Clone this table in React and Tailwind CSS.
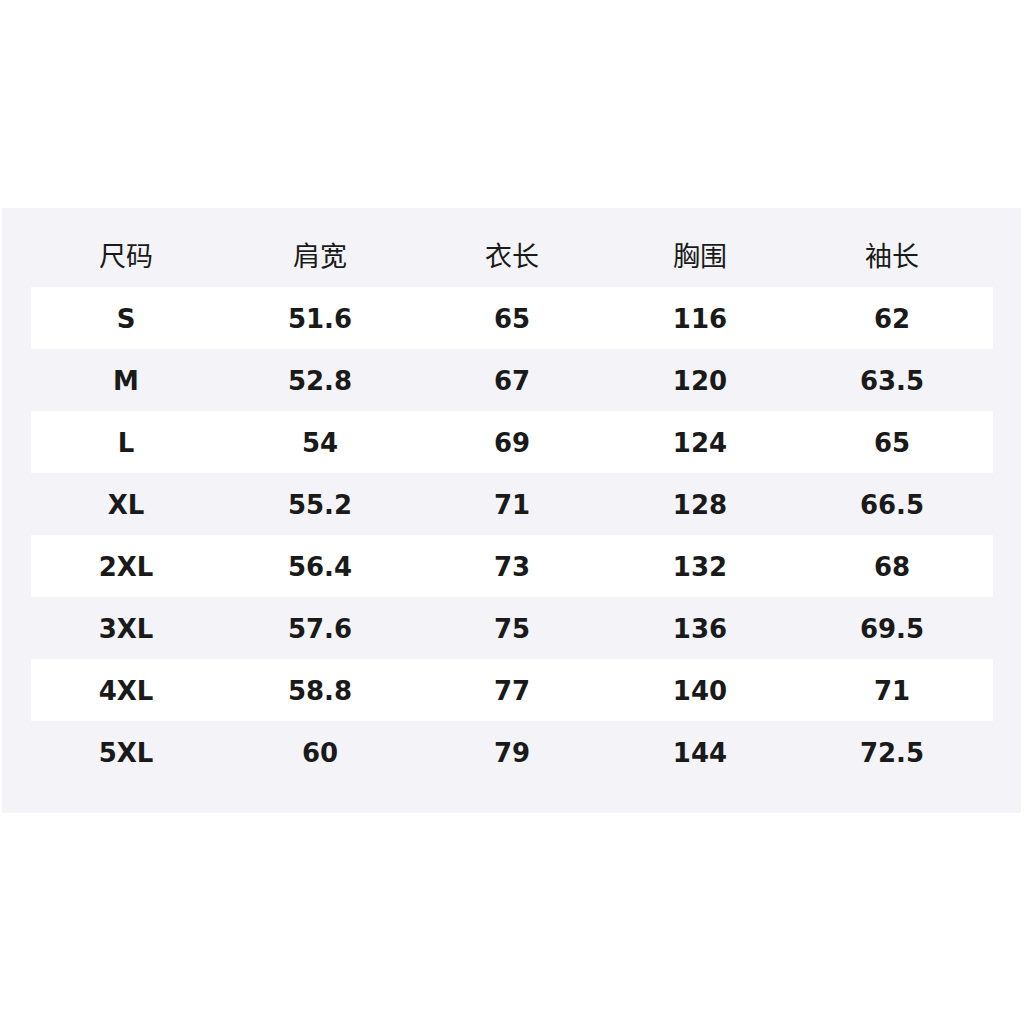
import React from "react";

const header = ["尺码", "肩宽", "衣长", "胸围", "袖长"];
const rows = [
  ["S", "51.6", "65", "116", "62"],
  ["M", "52.8", "67", "120", "63.5"],
  ["L", "54", "69", "124", "65"],
  ["XL", "55.2", "71", "128", "66.5"],
  ["2XL", "56.4", "73", "132", "68"],
  ["3XL", "57.6", "75", "136", "69.5"],
  ["4XL", "58.8", "77", "140", "71"],
  ["5XL", "60", "79", "144", "72.5"],
];

export default function App() {
  return (
    <div className="w-[1024px] h-[1024px] bg-white overflow-hidden">
      <div className="mt-[208px] ml-[2px] w-[1019px] bg-[#f4f4f8] pl-[29px] pr-[28px] pt-[14px] pb-[30px]">
        <div
          className="grid grid-cols-[190px_198px_186px_190px_194px] h-[65px] items-center text-[27px] text-[#1a1a1a]"
          style={{ fontFamily: '"Noto Sans CJK SC", "Noto Sans", sans-serif' }}
        >
          {header.map((h, i) => (
            <div key={i} className="text-center leading-none">
              {h}
            </div>
          ))}
        </div>
        {rows.map((r, ri) => (
          <div
            key={ri}
            className={
              "grid grid-cols-[190px_198px_186px_190px_194px] h-[62px] items-center text-[26px] font-bold text-[#1a1a1a] " +
              (ri % 2 === 0 ? "bg-white" : "bg-[#f4f4f8]")
            }
            style={{ fontFamily: '"DejaVu Sans", sans-serif' }}
          >
            {r.map((c, ci) => (
              <div key={ci} className="text-center leading-none pt-[2px]">
                {c}
              </div>
            ))}
          </div>
        ))}
      </div>
    </div>
  );
}
